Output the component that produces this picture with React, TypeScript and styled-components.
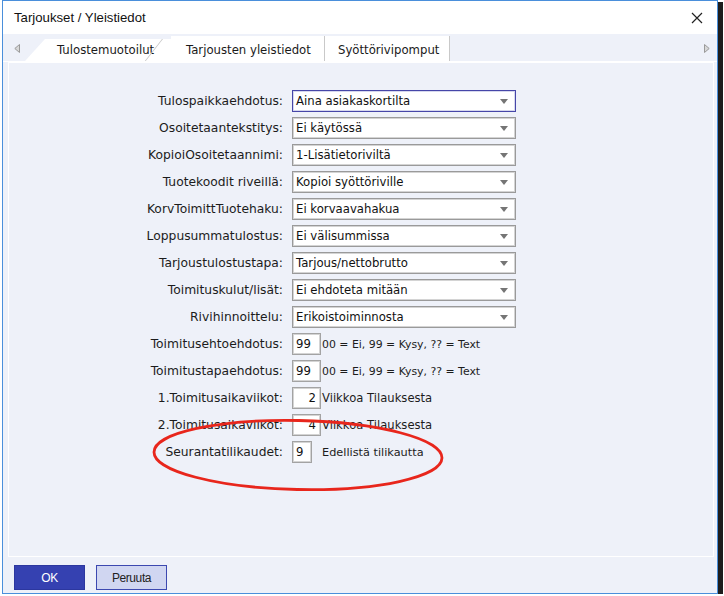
import { Fragment } from 'react';
import styled, { createGlobalStyle, css } from 'styled-components';

const GlobalStyle = createGlobalStyle`
  html, body {
    margin: 0;
    padding: 0;
    background: #ffffff;
  }
  body {
    font-family: "DejaVu Sans", Verdana, sans-serif;
    font-size: 11.7px;
    color: #1c1c1c;
  }
`;

const Window = styled.div`
  position: relative;
  box-sizing: border-box;
  width: 716px;
  height: 594px;
  margin-left: 2px;
  display: flex;
  flex-direction: column;
  background: #eef1f9;
  border: 1px solid #4a8fdb;
  box-shadow: 5px 2px 0 #1d1d1d;
`;

const TitleBar = styled.div`
  height: 33px;
  flex-shrink: 0;
  display: flex;
  align-items: center;
  justify-content: space-between;
  padding: 0 10px 0 11px;
  background: #ffffff;
`;

const Title = styled.span`
  font-family: "Liberation Sans", Arial, sans-serif;
  font-size: 13.2px;
  color: #111;
`;

const CloseButton = styled.button`
  width: 20px;
  height: 20px;
  padding: 0;
  border: none;
  background: none;
  display: flex;
  align-items: center;
  justify-content: center;
`;

const TabStrip = styled.div`
  height: 28px;
  flex-shrink: 0;
  box-sizing: border-box;
  display: flex;
  align-items: flex-end;
  padding: 0 3px 0 7px;
  border-bottom: 1px solid #ffffff;
`;

const ScrollArrow = styled.div`
  align-self: center;
  width: 14px;
  display: flex;
  justify-content: center;
  margin-top: 2px;
`;

const Tabs = styled.div`
  flex: 1;
  display: flex;
  height: 25px;
  padding-left: 1px;
`;

const Tab = styled.div<{ $first?: boolean; $pad: number; $width: number }>`
  position: relative;
  box-sizing: border-box;
  width: ${(p) => p.$width}px;
  height: 25px;
  display: flex;
  align-items: center;
  padding: 2px 0 0 ${(p) => p.$pad}px;
  background: #ffffff;
  font-size: 11.7px;
  color: #1a1a1a;
  white-space: nowrap;
  ${(p) =>
    p.$first
      ? css`
          clip-path: polygon(20px 3px, 100% 3px, 100% 100%, 0 100%);
          &::after {
            content: '';
            position: absolute;
            right: 8px;
            top: 3px;
            width: 1px;
            height: 24px;
            background: #c8c8c8;
            transform: skewX(-38deg);
            transform-origin: top;
          }
        `
      : css`
          border-right: 1px solid #c9c9c9;
        `}
`;

const Panel = styled.div`
  position: relative;
  flex: 1;
  margin: 0 3px 0 5px;
  background: #eef1f9;
  border: 1px solid #ffffff;
`;

const Form = styled.div`
  display: grid;
  grid-template-columns: 274px 224px;
  grid-auto-rows: 22px;
  column-gap: 9px;
  row-gap: 5px;
  padding-top: 27px;
`;

const Label = styled.label`
  display: flex;
  align-items: center;
  justify-content: flex-end;
  font-size: 12.3px;
  color: #1c1c1c;
  white-space: nowrap;
`;

const Select = styled.div<{ $focused?: boolean }>`
  box-sizing: border-box;
  height: 22px;
  display: flex;
  align-items: center;
  justify-content: space-between;
  padding: 0 7px 0 3px;
  background: #ffffff;
  font-size: 11.7px;
  color: #111;
  border: 1px solid ${(p) => (p.$focused ? '#4646a8' : '#9a9a9a')};
  box-shadow: inset 0 0 0 1px ${(p) => (p.$focused ? '#d6d8ee' : '#d4d4d4')};
`;

const Arrow = styled.span`
  width: 0;
  height: 0;
  border-left: 4px solid transparent;
  border-right: 4px solid transparent;
  border-top: 5px solid #757575;
`;

const FieldLine = styled.div<{ $gap: number }>`
  display: flex;
  align-items: center;
  gap: ${(p) => p.$gap}px;
  white-space: nowrap;
  color: #1c1c1c;
`;

const Note = styled.span<{ $size: number }>`
  font-size: ${(p) => p.$size}px;
`;

const SmallBox = styled.div<{ $width: number; $right?: boolean }>`
  box-sizing: border-box;
  width: ${(p) => p.$width}px;
  height: 22px;
  display: flex;
  align-items: center;
  justify-content: ${(p) => (p.$right ? 'flex-end' : 'flex-start')};
  padding: 0 4px 0 3px;
  background: #ffffff;
  border: 1px solid #a3a3a3;
  box-shadow: inset 0 0 0 1px #d4d4d4;
  font-size: 11.7px;
  color: #111;
`;

const Annotation = styled.svg`
  position: absolute;
  left: 143px;
  top: 356px;
  overflow: visible;
`;

const ButtonBar = styled.div`
  height: 36px;
  flex-shrink: 0;
  display: flex;
  gap: 11px;
  padding: 8px 0 0 11px;
  box-sizing: border-box;
`;

const Button = styled.button<{ $primary?: boolean }>`
  width: 71px;
  height: 25px;
  padding: 0;
  font-family: "Liberation Sans", Arial, sans-serif;
  font-size: 12px;
  letter-spacing: -0.4px;
  border: 1px solid ${(p) => (p.$primary ? '#2c379f' : '#3c48b0')};
  background: ${(p) => (p.$primary ? '#3541b1' : '#d0d6f1')};
  color: ${(p) => (p.$primary ? '#ffffff' : '#222')};
`;

const selects = [
  { label: 'Tulospaikkaehdotus:', value: 'Aina asiakaskortilta', focused: true },
  { label: 'Osoitetaantekstitys:', value: 'Ei käytössä' },
  { label: 'KopioiOsoitetaannimi:', value: '1-Lisätietoriviltä' },
  { label: 'Tuotekoodit riveillä:', value: 'Kopioi syöttöriville' },
  { label: 'KorvToimittTuotehaku:', value: 'Ei korvaavahakua' },
  { label: 'Loppusummatulostus:', value: 'Ei välisummissa' },
  { label: 'Tarjoustulostustapa:', value: 'Tarjous/nettobrutto' },
  { label: 'Toimituskulut/lisät:', value: 'Ei ehdoteta mitään' },
  { label: 'Rivihinnoittelu:', value: 'Erikoistoiminnosta' },
];

const boxes = [
  { label: 'Toimitusehtoehdotus:', value: '99', note: '00 = Ei, 99 = Kysy, ?? = Text', size: 10.9, width: 29, right: false, gap: 1 },
  { label: 'Toimitustapaehdotus:', value: '99', note: '00 = Ei, 99 = Kysy, ?? = Text', size: 10.9, width: 29, right: false, gap: 1 },
  { label: '1.Toimitusaikaviikot:', value: '2', note: 'Viikkoa Tilauksesta', size: 11.6, width: 29, right: true, gap: 1 },
  { label: '2.Toimitusaikaviikot:', value: '4', note: 'Viikkoa Tilauksesta', size: 11.6, width: 29, right: true, gap: 1 },
  { label: 'Seurantatilikaudet:', value: '9', note: 'Edellistä tilikautta', size: 11.3, width: 20, right: false, gap: 10 },
];

export default function App() {
  return (
    <>
      <GlobalStyle />
      <Window>
        <TitleBar>
          <Title>Tarjoukset / Yleistiedot</Title>
          <CloseButton aria-label="Sulje">
            <svg width="12" height="12" viewBox="0 0 12 12">
              <path d="M1 1 L11 11 M11 1 L1 11" stroke="#222" strokeWidth="1.2" />
            </svg>
          </CloseButton>
        </TitleBar>

        <TabStrip>
          <ScrollArrow>
            <svg width="6" height="9" viewBox="0 0 6 9">
              <path d="M5.5 0.5 L0.8 4.5 L5.5 8.5 Z" fill="#d8d8d8" stroke="#9a9a9a" strokeWidth="1" />
            </svg>
          </ScrollArrow>
          <Tabs>
            <Tab $first $width={146} $pad={32}>Tulostemuotoilut</Tab>
            <Tab $width={154} $pad={15}>Tarjousten yleistiedot</Tab>
            <Tab $width={125} $pad={13}>Syöttörivipomput</Tab>
          </Tabs>
          <ScrollArrow>
            <svg width="6" height="9" viewBox="0 0 6 9">
              <path d="M0.5 0.5 L5.2 4.5 L0.5 8.5 Z" fill="#d8d8d8" stroke="#9a9a9a" strokeWidth="1" />
            </svg>
          </ScrollArrow>
        </TabStrip>

        <Panel>
          <Form>
            {selects.map((s) => (
              <Fragment key={s.label}>
                <Label>{s.label}</Label>
                <Select $focused={s.focused}>
                  <span>{s.value}</span>
                  <Arrow />
                </Select>
              </Fragment>
            ))}
            {boxes.map((b) => (
              <Fragment key={b.label}>
                <Label>{b.label}</Label>
                <FieldLine $gap={b.gap}>
                  <SmallBox $width={b.width} $right={b.right}>{b.value}</SmallBox>
                  <Note $size={b.size}>{b.note}</Note>
                </FieldLine>
              </Fragment>
            ))}
          </Form>
          <Annotation width="292" height="72" viewBox="0 0 292 72">
            <ellipse
              cx="146"
              cy="36"
              rx="144"
              ry="34.5"
              fill="none"
              stroke="#e8261c"
              strokeWidth="2.8"
              transform="rotate(1.2 146 36)"
            />
          </Annotation>
        </Panel>

        <ButtonBar>
          <Button $primary>OK</Button>
          <Button>Peruuta</Button>
        </ButtonBar>
      </Window>
    </>
  );
}
